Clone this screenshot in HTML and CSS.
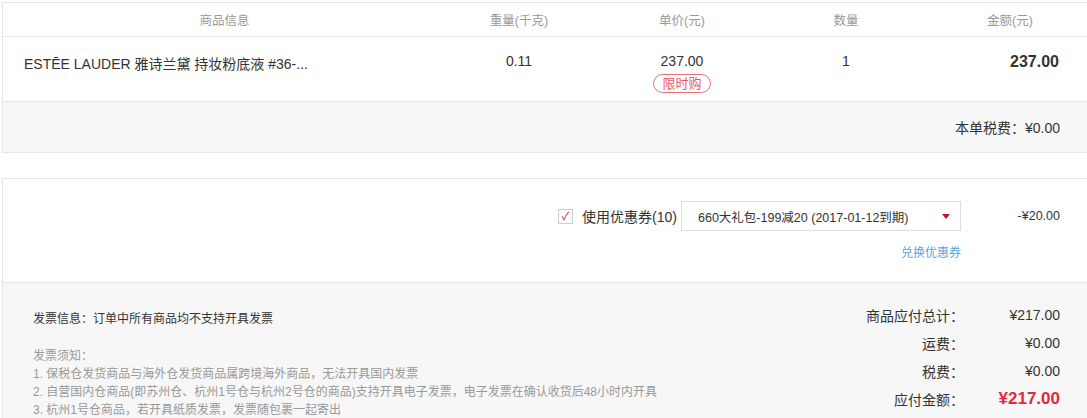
FILE: index.html
```html
<!DOCTYPE html>
<html lang="zh-CN">
<head>
<meta charset="utf-8">
<link rel="stylesheet" href="styles.css">
</head>
<body>
<div class="page">
  <div class="box order">
    <div class="grid head">
      <div>商品信息</div>
      <div>重量(千克)</div>
      <div>单价(元)</div>
      <div>数量</div>
      <div>金额(元)</div>
    </div>
    <div class="grid item">
      <div class="name">ESTĒE LAUDER 雅诗兰黛 持妆粉底液 #36-...</div>
      <div class="c">0.11</div>
      <div class="c price"><span>237.00</span><span class="tag">限时购</span></div>
      <div class="c">1</div>
      <div class="amount">237.00</div>
    </div>
    <div class="tax">本单税费：¥0.00</div>
  </div>

  <div class="box coupon">
    <div class="coupon-row">
      <label class="use"><span class="check">✓</span>使用优惠券(10)</label>
      <div class="select"><span>660大礼包-199减20 (2017-01-12到期)</span><span class="arrow"></span></div>
      <div class="discount">-¥20.00</div>
    </div>
    <div class="link-row"><a class="link">兑换优惠券</a></div>
  </div>

  <div class="summary">
    <div class="invoice">
      <p class="inv-title">发票信息：订单中所有商品均不支持开具发票</p>
      <div class="notes">
        <p>发票须知：</p>
        <p>1. 保税仓发货商品与海外仓发货商品属跨境海外商品，无法开具国内发票</p>
        <p>2. 自营国内仓商品(即苏州仓、杭州1号仓与杭州2号仓的商品)支持开具电子发票，电子发票在确认收货后48小时内开具</p>
        <p>3. 杭州1号仓商品，若开具纸质发票，发票随包裹一起寄出</p>
      </div>
    </div>
    <div class="totals">
      <div class="trow"><span class="lbl">商品应付总计：</span><span class="val">¥217.00</span></div>
      <div class="trow"><span class="lbl">运费：</span><span class="val">¥0.00</span></div>
      <div class="trow"><span class="lbl">税费：</span><span class="val">¥0.00</span></div>
      <div class="trow"><span class="lbl">应付金额：</span><span class="val pay">¥217.00</span></div>
    </div>
  </div>
</div>
</body>
</html>
```

FILE: styles.css
```css
html, body {
  margin: 0;
  padding: 0;
  background: #fff;
  overflow: hidden;
}
body {
  font-family: "Liberation Sans", "Noto Sans CJK SC", sans-serif;
  color: #333;
  font-size: 13px;
}
p { margin: 0; }
.page {
  padding: 2px 0 0 2px;
  width: 1100px;
}
.box {
  border: 1px solid #e6e6e6;
}
.grid {
  display: grid;
  grid-template-columns: 443px 146px 180px 148px 180px;
}
.head {
  height: 33px;
  align-items: center;
  text-align: center;
  color: #999;
  font-size: 12.5px;
  border-bottom: 1px solid #e6e6e6;
}
.item {
  height: 65px;
  border-bottom: 1px solid #e6e6e6;
  padding-top: 16px;
  box-sizing: border-box;
  align-items: start;
  font-size: 14px;
}
.item .name {
  padding-left: 21px;
}
.item .c {
  text-align: center;
}
.price {
  display: flex;
  flex-direction: column;
  align-items: center;
  gap: 5px;
}
.tag {
  display: inline-block;
  border: 1px solid #e8707e;
  color: #e8566a;
  border-radius: 10px;
  font-size: 13px;
  line-height: 17px;
  padding: 0 8px;
}
.amount {
  text-align: right;
  padding-right: 41px;
  font-weight: bold;
  font-size: 16px;
}
.tax {
  height: 50px;
  background: #f7f7f7;
  display: flex;
  align-items: center;
  justify-content: flex-end;
  padding-right: 41px;
  font-size: 14px;
}
.coupon {
  margin-top: 25px;
  height: 104px;
  border-bottom: none;
  box-sizing: border-box;
  padding-top: 22px;
}
.coupon-row {
  display: flex;
  align-items: center;
  justify-content: flex-end;
  padding-right: 41px;
}
.use {
  display: flex;
  align-items: center;
  font-size: 14px;
  margin-right: 4px;
}
.check {
  width: 13px;
  height: 13px;
  border: 1px solid #ccc;
  color: #c8102e;
  font-size: 11px;
  line-height: 13px;
  text-align: center;
  margin-right: 9px;
}
.select {
  width: 280px;
  height: 30px;
  box-sizing: border-box;
  border: 1px solid #ddd;
  display: flex;
  align-items: center;
  justify-content: space-between;
  padding: 0 10px 0 16px;
  font-size: 12.5px;
}
.arrow {
  width: 0;
  height: 0;
  border-left: 4px solid transparent;
  border-right: 4px solid transparent;
  border-top: 5px solid #c8102e;
}
.discount {
  width: 99px;
  text-align: right;
  font-size: 12.5px;
}
.link-row {
  display: flex;
  justify-content: flex-end;
  padding-right: 140px;
  margin-top: 12px;
}
.link {
  color: #5ba3dc;
  font-size: 12px;
}
.summary {
  background: #f7f7f7;
  border: 1px solid #e6e6e6;
  border-bottom: none;
  height: 140px;
  display: flex;
  justify-content: space-between;
  padding: 26px 41px 0 30px;
}
.invoice {
  font-size: 12px;
}
.inv-title {
  color: #333;
  margin-bottom: 21px;
}
.notes {
  color: #999;
  line-height: 18px;
}
.totals {
  display: flex;
  flex-direction: column;
  margin-top: -8px;
}
.trow {
  display: flex;
  justify-content: flex-end;
  align-items: center;
  height: 28px;
  font-size: 14px;
}
.lbl {
  text-align: right;
}
.val {
  width: 96px;
  text-align: right;
}
.pay {
  color: #e4273d;
  font-weight: bold;
  font-size: 17px;
}
```
